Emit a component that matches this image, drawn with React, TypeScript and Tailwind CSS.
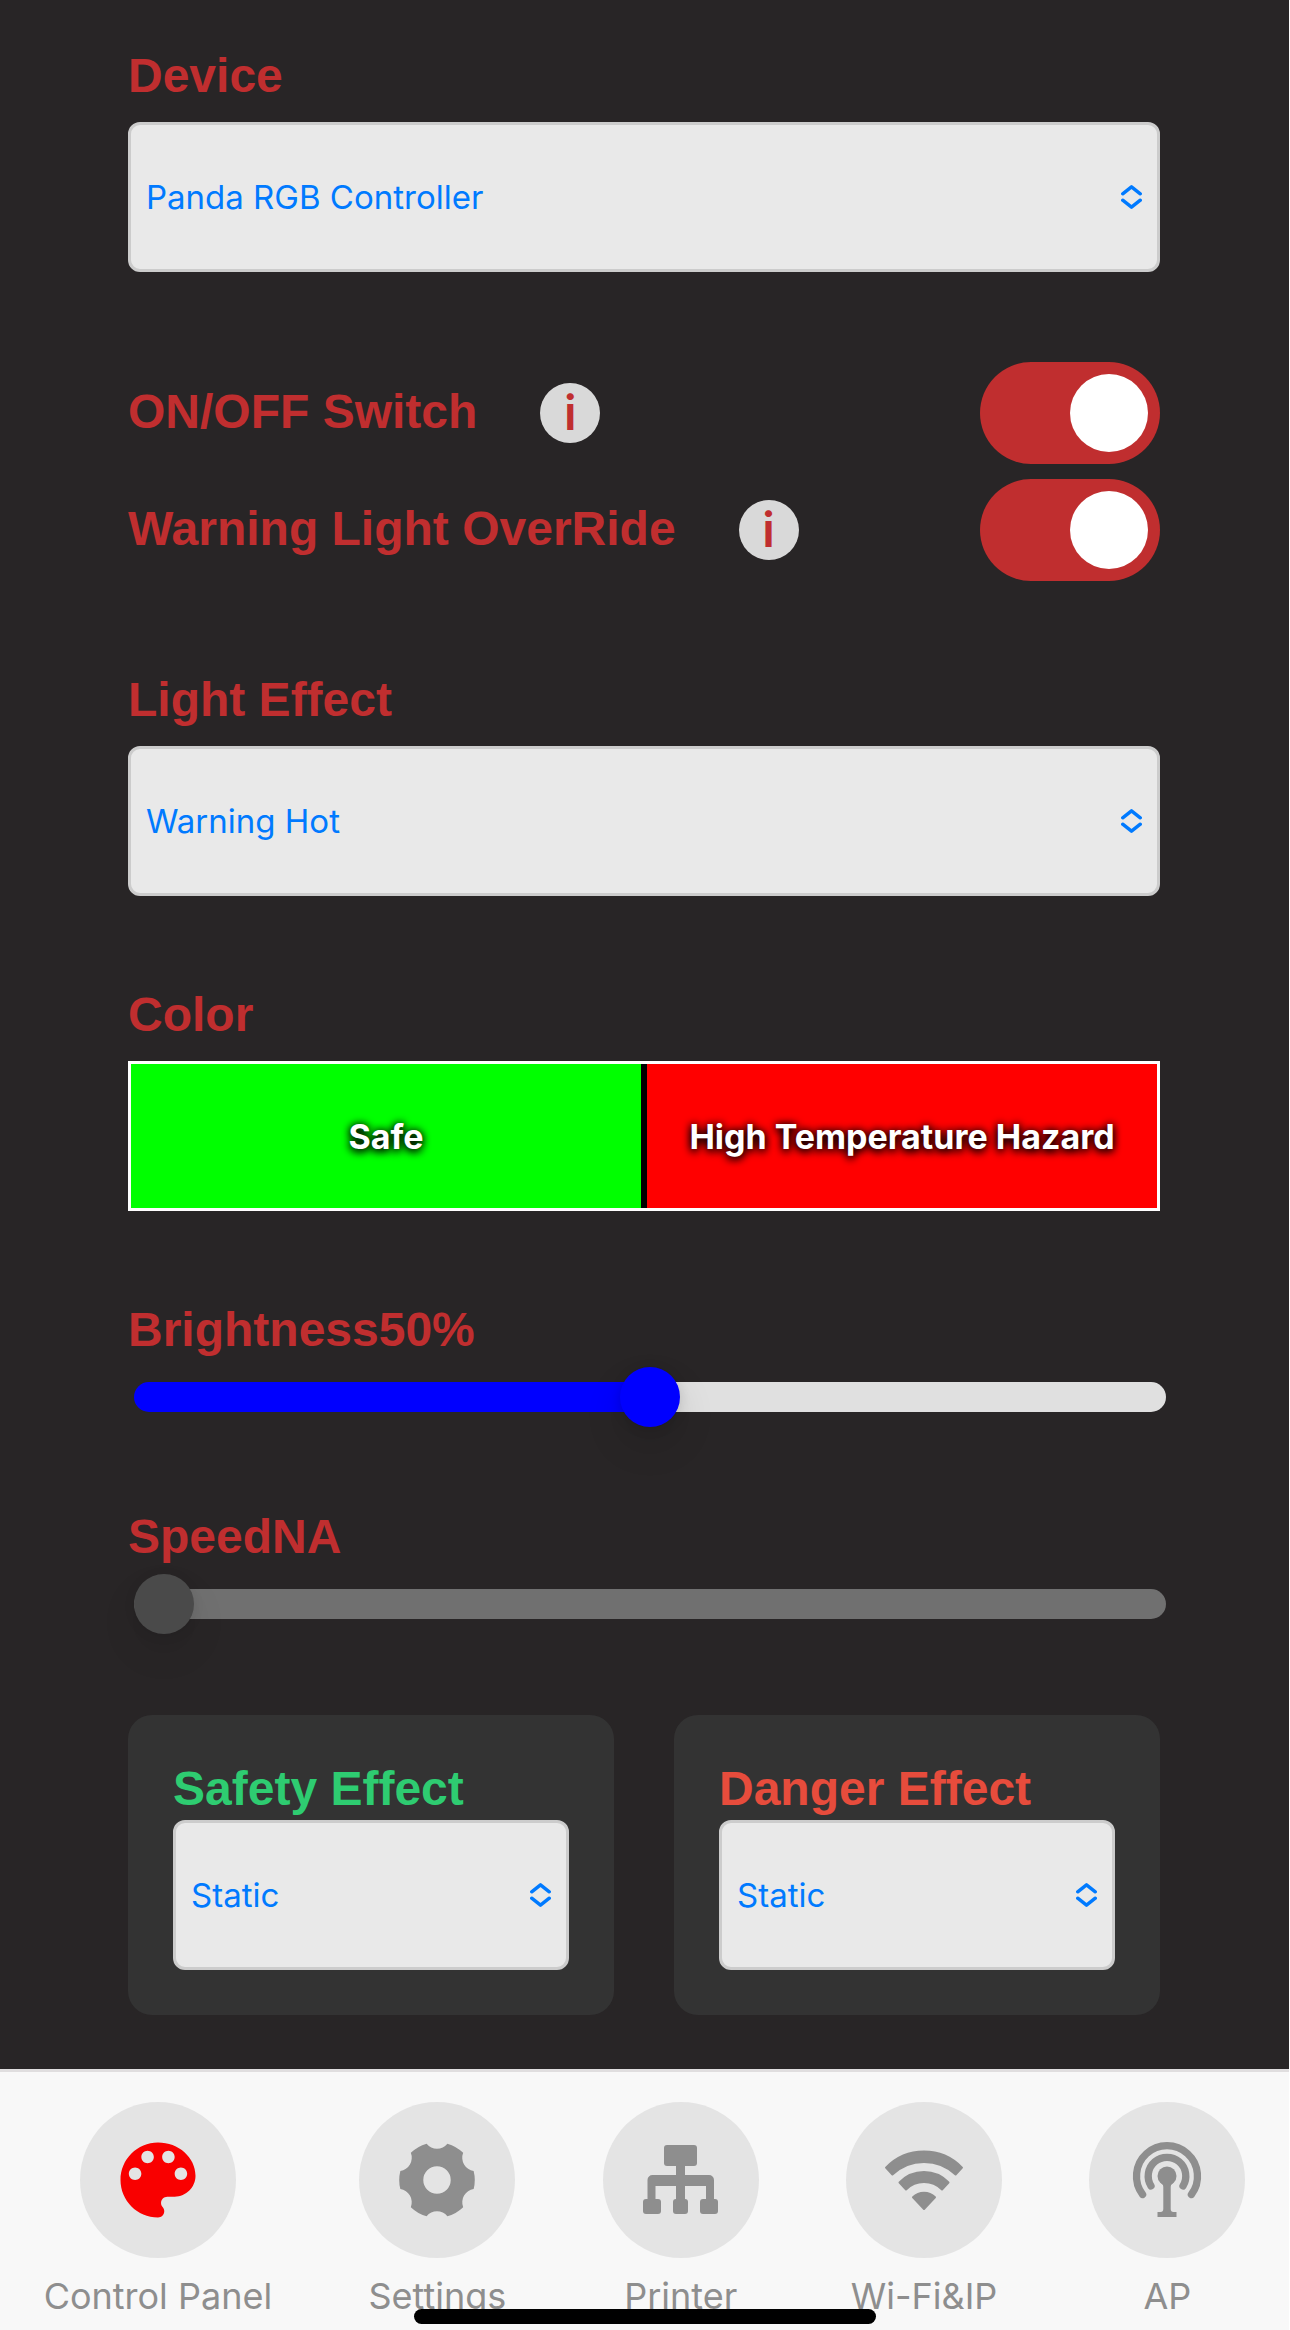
import { useState, type CSSProperties, type ReactNode } from "react";

function Label({ htmlFor, className, children }: { htmlFor: string; className: string; children: ReactNode }) {
  return (
    <label
      htmlFor={htmlFor}
      className={`block font-['Liberation_Sans',Arial,sans-serif] text-[48px] leading-[58px] font-bold ${className}`}
    >
      {children}
    </label>
  );
}

function Select({ id, options }: { id: string; options: string[] }) {
  return (
    <div className="relative">
      <select
        id={id}
        className="block h-[150px] w-full appearance-none rounded-xl border-3 border-[#cccccc] bg-[#e9e9e9] pt-0.5 pr-14 pl-[15px] text-[33px] text-[#007aff]"
      >
        {options.map((o) => (
          <option key={o}>{o}</option>
        ))}
      </select>
      <svg
        aria-hidden="true"
        viewBox="0 0 21 24"
        className="pointer-events-none absolute top-[63px] right-[18px] h-6 w-[21px] fill-none stroke-[#007aff]"
        strokeWidth="3.4"
        strokeLinecap="round"
        strokeLinejoin="round"
      >
        <path d="M1.700 8.800 10.500 1.800l8.800 7M1.700 15.200l8.800 7 8.800-7" />
      </svg>
    </div>
  );
}

function Field({ id, label, options }: { id: string; label: string; options: string[] }) {
  return (
    <div>
      <Label htmlFor={id} className="mb-[17px] text-[#c02e2f]">{label}</Label>
      <Select id={id} options={options} />
    </div>
  );
}

function ToggleRow({ id, label }: { id: string; label: string }) {
  return (
    <div className="flex items-center">
      <Label htmlFor={id} className="pb-0.5 text-[#c02e2f]">{label}</Label>
      <button
        type="button"
        aria-label={`About ${label}`}
        className="ml-[63px] flex size-[60px] items-center justify-center rounded-full bg-[#d9d9d9] text-[48px] leading-[60px] font-semibold text-[#c02e2f]"
      >
        i
      </button>
      <input
        id={id}
        type="checkbox"
        role="switch"
        defaultChecked
        className="ml-auto flex h-[102px] w-[180px] shrink-0 appearance-none items-center rounded-full bg-[#707070] px-3 before:size-[78px] before:rounded-full before:bg-white checked:justify-end checked:bg-[#c02e2f]"
      />
    </div>
  );
}

function BrightnessSlider() {
  const [value, setValue] = useState(50);
  return (
    <div>
      <Label htmlFor="brightness" className="mb-2 text-[#c02e2f]">Brightness{value}%</Label>
      <div className="-mr-1.5 pl-1.5">
        <input
          id="brightness"
          type="range"
          value={value}
          onChange={(e) => setValue(Number(e.target.value))}
          style={{ "--fill": `${value}%` } as CSSProperties}
          className="block h-[60px] w-full appearance-none bg-transparent [&::-webkit-slider-runnable-track]:h-[30px] [&::-webkit-slider-runnable-track]:rounded-full [&::-webkit-slider-runnable-track]:bg-[linear-gradient(to_right,#0000ff_var(--fill),#e0e0e0_var(--fill))] [&::-webkit-slider-thumb]:mt-[-15px] [&::-webkit-slider-thumb]:size-[60px] [&::-webkit-slider-thumb]:appearance-none [&::-webkit-slider-thumb]:rounded-full [&::-webkit-slider-thumb]:bg-[#0000ff] [&::-webkit-slider-thumb]:shadow-[0_2px_12px_rgba(0,0,0,0.12),0_18px_39px_rgba(0,0,0,0.12)]"
        />
      </div>
    </div>
  );
}

function SpeedSlider() {
  return (
    <div>
      <Label htmlFor="speed" className="mb-2 text-[#c02e2f]">SpeedNA</Label>
      <div className="-mr-1.5 pl-1.5">
        <input
          id="speed"
          type="range"
          defaultValue={0}
          disabled
          className="block h-[60px] w-full appearance-none bg-transparent [&::-webkit-slider-runnable-track]:h-[30px] [&::-webkit-slider-runnable-track]:rounded-full [&::-webkit-slider-runnable-track]:bg-[#707070] [&::-webkit-slider-thumb]:mt-[-15px] [&::-webkit-slider-thumb]:size-[60px] [&::-webkit-slider-thumb]:appearance-none [&::-webkit-slider-thumb]:rounded-full [&::-webkit-slider-thumb]:bg-[#4a4a4a] [&::-webkit-slider-thumb]:shadow-[0_2px_12px_rgba(0,0,0,0.08),0_18px_39px_rgba(0,0,0,0.08)]"
        />
      </div>
    </div>
  );
}

function EffectCard({ id, label, color }: { id: string; label: string; color: string }) {
  return (
    <div className="rounded-3xl bg-[#333333] p-[45px]">
      <Label htmlFor={id} className={`mb-0.5 ${color}`}>{label}</Label>
      <Select id={id} options={["Static", "Breathing", "Flashing"]} />
    </div>
  );
}

const PaletteIcon = () => (
  <svg viewBox="0 0 24 24" className="size-[100px] text-[#f90000]" fill="currentColor" aria-hidden="true">
    <path d="M12 3c-4.970 0-9 4.030-9 9s4.030 9 9 9c.83 0 1.500-.67 1.500-1.500 0-.39-.15-.74-.39-1.010-.23-.26-.38-.61-.38-.99 0-.83.67-1.500 1.500-1.500H16c2.760 0 5-2.240 5-5 0-4.420-4.030-8-9-8zm-5.500 9c-.83 0-1.500-.67-1.500-1.500S5.670 9 6.500 9 8 9.670 8 10.500 7.330 12 6.500 12zm3-4C8.670 8 8 7.330 8 6.500S8.670 5 9.500 5s1.500.67 1.500 1.500S10.330 8 9.500 8zm5 0c-.83 0-1.500-.67-1.500-1.500S13.670 5 14.500 5s1.500.67 1.500 1.500S15.330 8 14.500 8zm3 4c-.83 0-1.500-.67-1.500-1.500S16.670 9 17.500 9s1.500.67 1.500 1.500-.67 1.500-1.500 1.500z" />
  </svg>
);

const GearIcon = () => (
  <svg viewBox="0 0 100 100" className="size-[98px]" fill="currentColor" aria-hidden="true">
    <path
      fillRule="evenodd"
      d="M39.4 13A13.6 13.6 0 0 0 60.6 13A38.5 38.5 0 0 1 76.7 22.3A13.6 13.6 0 0 0 87.4 40.7A38.5 38.5 0 0 1 87.4 59.3A13.6 13.6 0 0 0 76.7 77.7A38.5 38.5 0 0 1 60.6 87A13.6 13.6 0 0 0 39.4 87A38.5 38.5 0 0 1 23.3 77.7A13.6 13.6 0 0 0 12.6 59.3A38.5 38.5 0 0 1 12.6 40.7A13.6 13.6 0 0 0 23.3 22.3A38.5 38.5 0 0 1 39.4 13ZM50 36a14 14 0 1 0 0 28a14 14 0 1 0 0-28Z"
    />
  </svg>
);

const TreeIcon = () => (
  <svg viewBox="0 0 100 100" className="size-[100px]" fill="currentColor" aria-hidden="true">
    <rect x="33" y="15" width="33" height="21" rx="3" />
    <path d="M45 34h9v11h24a5 5 0 0 1 5 5v21h-8V56H54v15h-9V56H24.500v15H16.500V50a5 5 0 0 1 5-5H45Z" />
    <rect x="12" y="69" width="18" height="15" rx="3" />
    <rect x="42" y="69" width="15" height="15" rx="3" />
    <rect x="69" y="69" width="18" height="15" rx="3" />
  </svg>
);

const WifiIcon = () => (
  <svg viewBox="0 0 100 100" className="size-[100px] stroke-2" fill="currentColor" stroke="currentColor" strokeLinejoin="round" aria-hidden="true">
    <path d="M12 37.600A53 53 0 0 1 88 37.600L81.600 44.500A46 46 0 0 0 18.400 44.500Z" />
    <path d="M25.500 52.500A34 34 0 0 1 74.500 52.500L68 59.500A25.500 25.500 0 0 0 32 59.500Z" />
    <path d="M39 67.300A15.500 15.500 0 0 1 61 67.300L50 79Z" />
  </svg>
);

const AntennaIcon = () => (
  <svg viewBox="0 0 100 100" className="size-[100px]" fill="currentColor" aria-hidden="true">
    <g fill="none" stroke="currentColor" strokeWidth="7.3" strokeLinecap="round">
      <path d="M25.600 64.500A30.500 30.500 0 1 1 74.400 64.500" />
      <path d="M34 56A18.800 18.800 0 1 1 66 56" />
    </g>
    <circle cx="50" cy="46" r="9.500" />
    <path d="M43.500 52.500Q46.300 54.500 46.300 57V79Q46.300 82 43.500 82H40.500V87H59.500V82H56.500Q53.700 82 53.700 79V57Q53.700 54.500 56.500 52.500Z" />
  </svg>
);

const tabs = [
  { label: "Control Panel", icon: <PaletteIcon /> },
  { label: "Settings", icon: <GearIcon /> },
  { label: "Printer", icon: <TreeIcon /> },
  { label: "Wi-Fi&IP", icon: <WifiIcon /> },
  { label: "AP", icon: <AntennaIcon /> },
];

export default function App() {
  return (
    <div className="bg-white font-[Inter,sans-serif]">
      <div className="relative mr-px flex min-h-screen flex-col bg-[#282526]">
        <main className="flex grow flex-col gap-[90px] pt-[47px] pr-[129px] pb-[54px] pl-32">
          <Field id="device" label="Device" options={["Panda RGB Controller"]} />

          <div className="flex flex-col gap-[15px]">
            <ToggleRow id="power" label="ON/OFF Switch" />
            <ToggleRow id="override" label="Warning Light OverRide" />
          </div>

          <Field id="effect" label="Light Effect" options={["Warning Hot", "Static"]} />

          <div>
            <Label htmlFor="safe-color" className="mb-[17px] text-[#c02e2f]">Color</Label>
            <div className="grid h-[150px] grid-cols-2 gap-1.5 border-3 border-white bg-black text-[34px] font-bold text-white">
              <button
                id="safe-color"
                type="button"
                className="bg-[#00ff00] [text-shadow:0_3px_9px_#000000,0_0_9px_#000000]"
              >
                Safe
              </button>
              <button
                type="button"
                className="bg-[#ff0000] [text-shadow:0_3px_9px_#000000,0_0_9px_#000000]"
              >
                High Temperature Hazard
              </button>
            </div>
          </div>

          <div className="flex flex-col gap-[81px]">
            <BrightnessSlider />
            <SpeedSlider />
            <div className="grid grid-cols-2 gap-[60px]">
              <EffectCard id="safety" label="Safety Effect" color="text-[#2ecc71]" />
              <EffectCard id="danger" label="Danger Effect" color="text-[#e74c3c]" />
            </div>
          </div>
        </main>

        <nav className="flex justify-around border-t-3 border-[#e0dedf] bg-[#f8f8f8] pt-[30px] pb-3">
          {tabs.map((t) => (
            <a key={t.label} href="#" className="flex flex-col items-center gap-4 text-[#8e8e8e]">
              <span className="flex size-[156px] items-center justify-center rounded-full bg-[#e4e4e4]">{t.icon}</span>
              <span className="text-[36px] leading-[44px] whitespace-nowrap">{t.label}</span>
            </a>
          ))}
        </nav>

        <div className="pointer-events-none absolute bottom-1.5 left-1/2 h-[15px] w-[462px] -translate-x-1/2 rounded-full bg-black" />
      </div>
    </div>
  );
}
